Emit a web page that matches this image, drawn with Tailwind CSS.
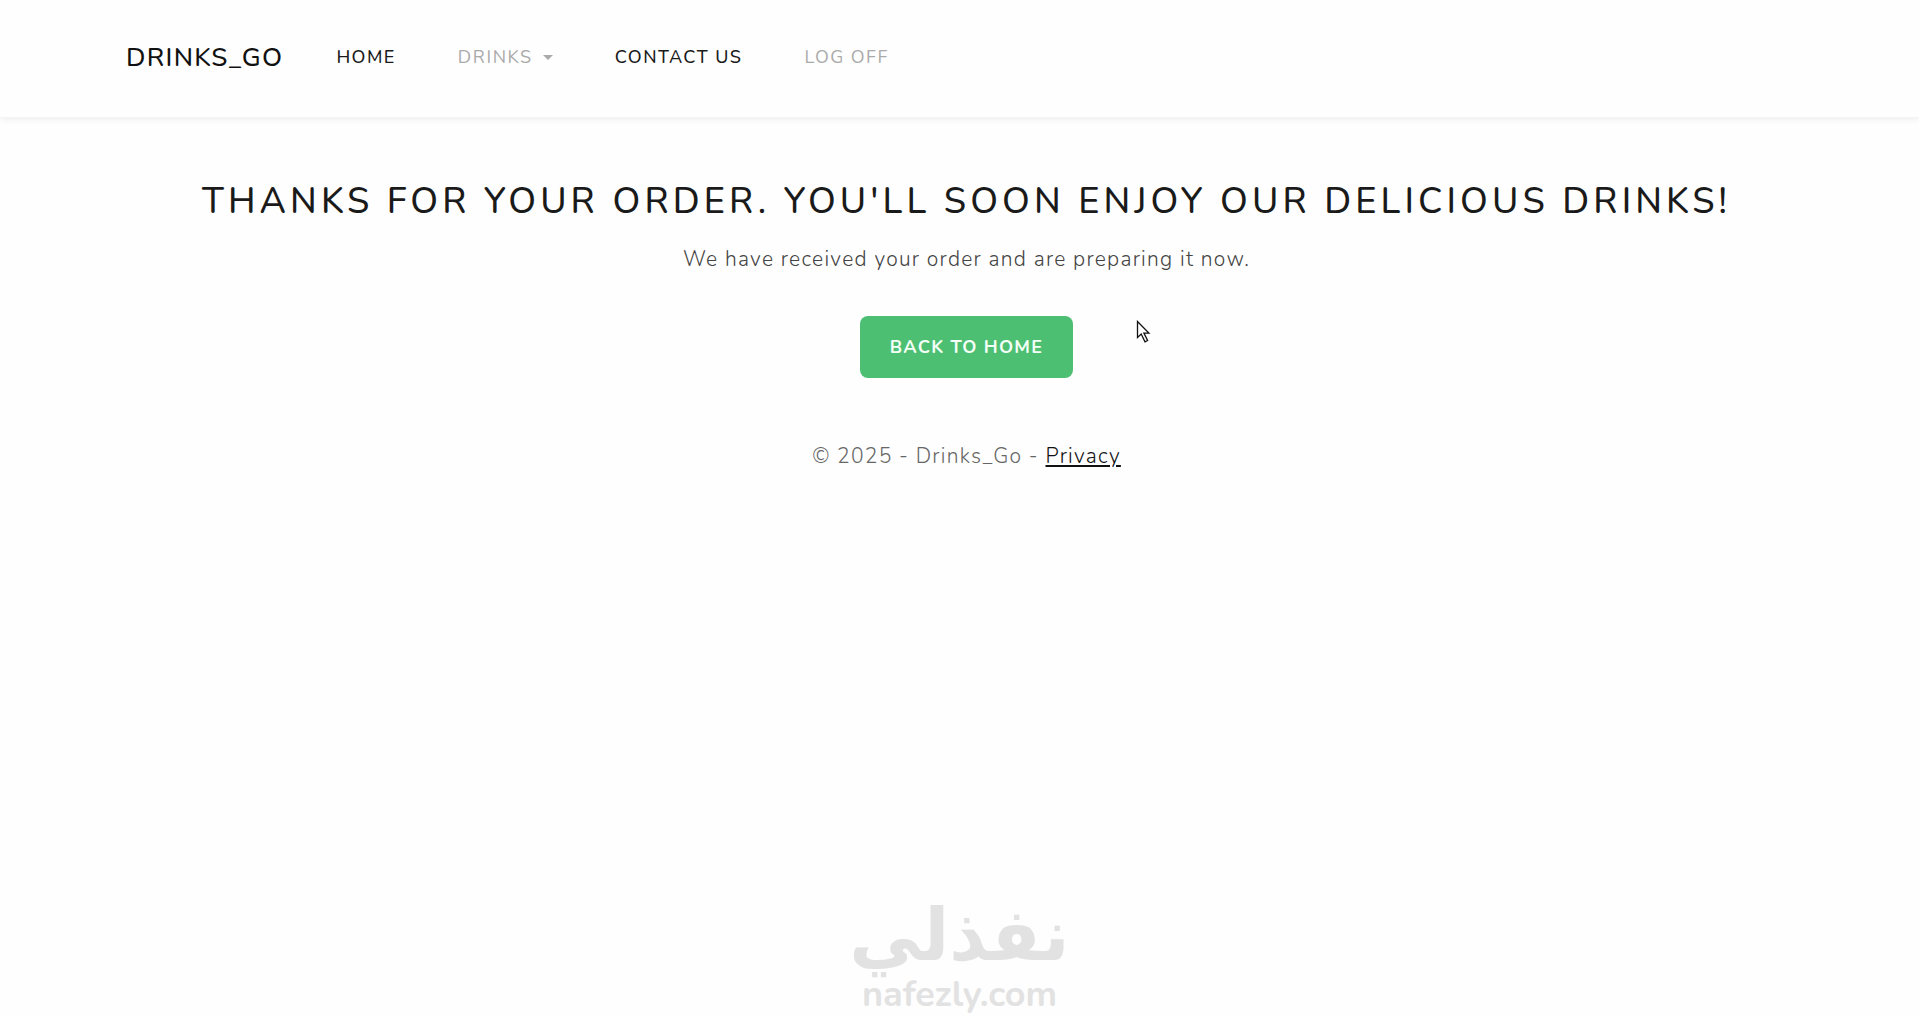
<!DOCTYPE html>
<html lang="en">
<head>
<meta charset="utf-8">
<title>Drinks_Go</title>
<script src="https://cdn.jsdelivr.net/npm/@tailwindcss/browser@4"></script>
</head>
<body class="relative flex min-h-screen flex-col bg-[#fefefe] font-['Nunito','Lato',sans-serif] text-[#1a1a1a]">
  <header class="border-b border-gray-100 bg-[#fefefe] shadow-[0_2px_6px_rgba(0,0,0,0.06)]">
    <nav class="flex h-[117px] items-center pb-[2px] pl-[126px] tracking-[0.09em]">
      <a href="#" class="mr-[53px] text-[26px] font-medium tracking-wider text-[#111]">DRINKS_GO</a>
      <ul class="flex items-center gap-[62px] text-[18px]">
        <li><a href="#" class="font-medium">HOME</a></li>
        <li><button type="button" class="flex items-center gap-[10px] tracking-[0.09em] text-[#aaa]">DRINKS
          <svg class="h-[5px] w-[10px]" viewBox="0 0 10 5" fill="currentColor" aria-hidden="true"><path d="M0 0h10L5 5z"/></svg></button></li>
        <li><a href="#" class="font-medium">CONTACT US</a></li>
        <li><a href="#" class="text-[#aaa]">LOG OFF</a></li>
      </ul>
    </nav>
  </header>

  <main class="flex flex-col items-center pt-[60px] pl-[14px] text-center">
    <h1 class="text-[36px] leading-[48px] font-medium tracking-[0.115em]">THANKS FOR YOUR ORDER. YOU'LL SOON ENJOY OUR DELICIOUS DRINKS!</h1>
    <p class="mt-[17px] text-[21px] leading-8 font-light tracking-[0.06em] text-[#444]">We have received your order and are preparing it now.</p>
    <a href="#" class="mt-[41px] flex h-[62px] items-center rounded-lg bg-[#4dbf73] px-[30px] text-[18px] font-bold tracking-[0.07em] text-[#f4fff7]">BACK TO HOME</a>
  </main>

  <footer class="mt-[62px] pl-[14px] text-center text-[21px] leading-8 font-light tracking-[0.06em] text-[#666]">
    © 2025 - Drinks_Go - <a href="#" class="text-[#111] underline">Privacy</a>
  </footer>

  <div class="mt-auto flex flex-col items-center text-[#e2e2e2]">
    <p lang="ar" dir="rtl" class="font-['DejaVu_Sans'] text-[72px] leading-[76px] font-bold">نفذلي</p>
    <p class="text-[36px] leading-[44px] font-bold">nafezly.com</p>
  </div>

  <svg class="absolute top-[320px] left-[1136px] h-[24px] w-[15px]" viewBox="0 0 15 24" fill="#fff" stroke="#111" stroke-width="1.3" aria-hidden="true"><path d="M1.5 1.5v16l3.7-3.5 3.8 7.8 2.6-1.3-3.7-7.4h5z"/></svg>
</body>
</html>
